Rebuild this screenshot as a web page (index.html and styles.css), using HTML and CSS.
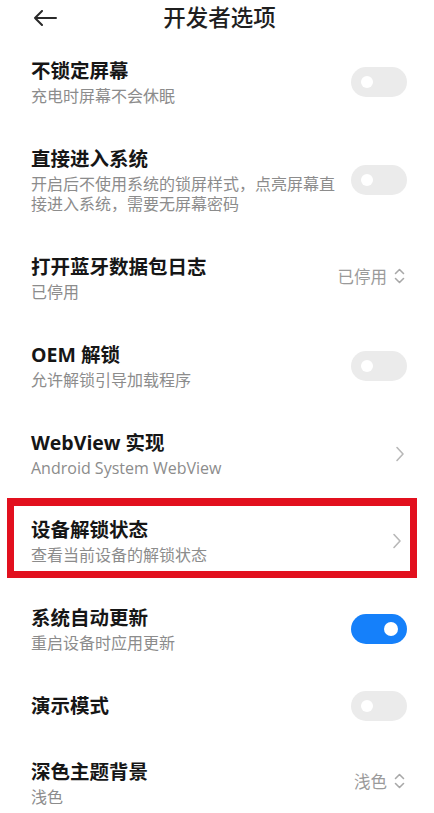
FILE: index.html
```html
<!DOCTYPE html>
<html lang="zh-CN">
<head>
<meta charset="utf-8">
<title>开发者选项</title>
<link rel="stylesheet" href="styles.css">
</head>
<body>
<div class="page">
  <header class="header">
    <svg class="back" width="24" height="16" viewBox="0 0 24 16"><path d="M23 8H2M9 1L2 8l7 7" fill="none" stroke="#2a2a2a" stroke-width="2" stroke-linecap="round" stroke-linejoin="round"/></svg>
    <h1 class="title">开发者选项</h1>
  </header>

  <div class="row">
    <div class="text"><div class="t">不锁定屏幕</div><div class="s">充电时屏幕不会休眠</div></div>
    <div class="toggle"><span class="knob"></span></div>
  </div>

  <div class="row">
    <div class="text narrow"><div class="t">直接进入系统</div><div class="s">开启后不使用系统的锁屏样式，点亮屏幕直接进入系统，需要无屏幕密码</div></div>
    <div class="toggle"><span class="knob"></span></div>
  </div>

  <div class="row">
    <div class="text"><div class="t">打开蓝牙数据包日志</div><div class="s">已停用</div></div>
    <div class="value">已停用
      <svg class="updown" width="11" height="16" viewBox="0 0 11 16"><path d="M1.5 5.5L5.5 1.5l4 4M1.5 10.5l4 4 4-4" fill="none" stroke="#a8a8a8" stroke-width="1.6" stroke-linecap="round" stroke-linejoin="round"/></svg>
    </div>
  </div>

  <div class="row">
    <div class="text"><div class="t">OEM 解锁</div><div class="s">允许解锁引导加载程序</div></div>
    <div class="toggle"><span class="knob"></span></div>
  </div>

  <div class="row">
    <div class="text"><div class="t">WebView 实现</div><div class="s">Android System WebView</div></div>
    <svg class="chev" width="10" height="16" viewBox="0 0 10 16"><path d="M2 1.5L8 8l-6 6.5" fill="none" stroke="#b8b8b8" stroke-width="1.6" stroke-linecap="round" stroke-linejoin="round"/></svg>
  </div>

  <div class="highlight">
    <div class="row inner">
      <div class="text"><div class="t">设备解锁状态</div><div class="s">查看当前设备的解锁状态</div></div>
      <svg class="chev" width="10" height="16" viewBox="0 0 10 16"><path d="M2 1.5L8 8l-6 6.5" fill="none" stroke="#b8b8b8" stroke-width="1.6" stroke-linecap="round" stroke-linejoin="round"/></svg>
    </div>
  </div>

  <div class="row">
    <div class="text"><div class="t">系统自动更新</div><div class="s">重启设备时应用更新</div></div>
    <div class="toggle on"><span class="knob"></span></div>
  </div>

  <div class="row single">
    <div class="text"><div class="t">演示模式</div></div>
    <div class="toggle"><span class="knob"></span></div>
  </div>

  <div class="row">
    <div class="text"><div class="t">深色主题背景</div><div class="s">浅色</div></div>
    <div class="value">浅色
      <svg class="updown" width="11" height="16" viewBox="0 0 11 16"><path d="M1.5 5.5L5.5 1.5l4 4M1.5 10.5l4 4 4-4" fill="none" stroke="#a8a8a8" stroke-width="1.6" stroke-linecap="round" stroke-linejoin="round"/></svg>
    </div>
  </div>
</div>
</body>
</html>
```

FILE: styles.css
```css
html, body {
  margin: 0;
  padding: 0;
  background: #ffffff;
}
body {
  font-family: "Open Sans", "Noto Sans CJK SC", sans-serif;
  color: #1a1a1a;
}
.page {
  width: 434px;
  overflow: hidden;
}
.header {
  height: 38px;
  display: flex;
  align-items: center;
  position: relative;
}
.back {
  margin-left: 33px;
  margin-top: -2px;
}
.title {
  position: absolute;
  left: 0;
  right: 0;
  top: 0;
  margin: 0;
  padding-left: 5px;
  text-align: center;
  font-size: 22.5px;
  line-height: 36px;
  font-weight: 500;
  color: #1f1f1f;
  pointer-events: none;
}
.row {
  display: flex;
  align-items: center;
  justify-content: space-between;
  padding: 20px 27px 20px 31px;
}
.row.single {
  padding-top: 18px;
  padding-bottom: 18px;
}
.text {
  flex: 1;
  min-width: 0;
}
.text.narrow {
  max-width: 310px;
}
.t {
  font-size: 19.5px;
  line-height: 26px;
  font-weight: 700;
  color: #161616;
}
.s {
  font-size: 16px;
  line-height: 20px;
  margin-top: 2px;
  color: #8c8c8c;
}
.toggle {
  width: 56px;
  height: 30px;
  border-radius: 15px;
  background: #ebebeb;
  position: relative;
  flex-shrink: 0;
  margin-left: 12px;
}
.knob {
  position: absolute;
  left: 10px;
  top: 9px;
  width: 12px;
  height: 12px;
  border-radius: 50%;
  background: #ffffff;
}
.toggle.on {
  background: #1580fa;
}
.toggle.on .knob {
  left: 33px;
  top: 8px;
  width: 14px;
  height: 14px;
}
.value {
  display: flex;
  align-items: center;
  font-size: 16.5px;
  color: #9a9a9a;
  gap: 7px;
  margin-top: -4px;
  margin-right: 2px;
}
.chev {
  flex-shrink: 0;
  margin-right: 2px;
}
.highlight {
  margin: 0 17px 7px 7px;
  border: 7px solid #e2101e;
  border-top-width: 8px;
}
.row.inner {
  padding: 11px 6px 6px 17px;
}
```
